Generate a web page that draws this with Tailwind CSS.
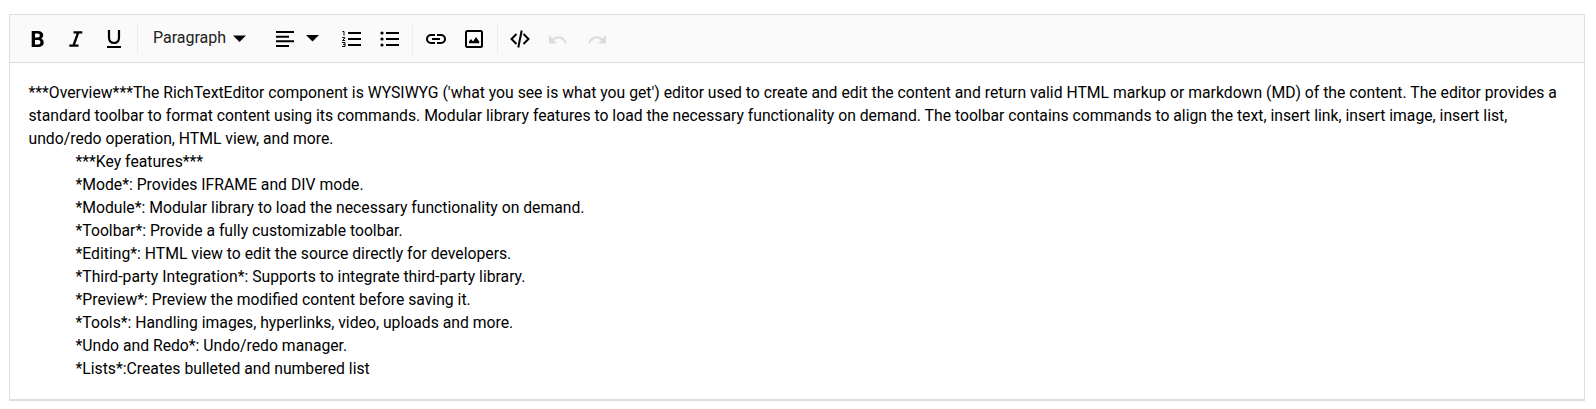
<!DOCTYPE html>
<html lang="en"><head><meta charset="utf-8"><title>Markdown editor</title>
<script src="https://cdn.jsdelivr.net/npm/@tailwindcss/browser@4"></script></head>
<body class="bg-white font-['Roboto',sans-serif] text-black">
<main class="ml-[9px] mt-[14px] flex h-[387px] w-[1576px] flex-col border border-b-2 border-[#dedede]">
<div class="flex h-12 shrink-0 items-start border-b border-[#dedede] bg-[#fafafa] pl-[15px]">
<svg class="mt-2 size-8 mr-1.5" viewBox="0 0 32 32"><path transform="translate(.7 0)" fill-rule="evenodd" d="M6 8h6.200c3.400 0 5.300 1.600 5.300 4.300 0 1.600-.8 2.800-2 3.400 1.600.5 2.500 1.900 2.500 3.800 0 2.900-2.200 4.500-5.500 4.500H6zM9.300 10.500v4h2.600c1.500 0 2.200-.7 2.200-2s-.7-2-2.100-2zM9.300 17v4.500h3.100c1.500 0 2.300-.8 2.300-2.200S13.800 17 12.400 17z"/></svg>
<svg class="mt-2 size-8 mr-1.5" viewBox="0 0 32 32"><path d="M10.500 8.200H19.300v2.300h-3.200L12.100 21.500H15.500V23.800H6.300v-2.300h3.300l4-11h-3.100z"/></svg>
<svg class="mt-2 size-8 mr-1" viewBox="0 0 32 32"><path d="M8 7v7.500c0 4 2 5.500 5 5.500s5-1.500 5-5.500V7" fill="none" stroke="#000" stroke-width="2.200"/><path d="M6 23h14v2H6z"/></svg>
<div class="mt-2 h-[31px] w-px bg-[#ececec]"></div>
<button class="ml-[15px] mt-[11px] flex h-6 w-[93px] items-center justify-between text-base text-[#212121]"><span>Paragraph</span><svg class="size-[13px] mt-0.5" viewBox="0 0 13 13"><path d="M0 2.500h13L6.500 9z" fill="#000"/></svg></button>
<svg class="ml-[30px] mt-4 h-4 w-[18px]" viewBox="0 0 18 16"><path d="M0 0h18v2H0zM0 4.700h13v2H0zM0 9.300h18v2H0zM0 14h13v2H0z"/></svg>
<svg class="ml-3 mt-5 h-[7px] w-[13px]" viewBox="0 0 13 7"><path d="M0 0h13L6.500 6.500z"/></svg>
<svg class="ml-[23px] mt-4 h-4 w-[19px]" viewBox="0 0 19 16"><path d="M6 1h13v2H6zM6 7h13v2H6zM6 13h13v2H6z"/><path d="M.5.500H2V4.500M.2 6.500h2.600v.5L.5 9.500H3.200M0 11.500h3v4H0M1 13.500h2" fill="none" stroke="#000"/></svg>
<svg class="ml-[19px] mt-4 h-4 w-[19px]" viewBox="0 0 19 16"><path d="M6 1h13v2H6zM6 7h13v2H6zM6 13h13v2H6z"/><circle cx="2" cy="2" r="1.600"/><circle cx="2" cy="8" r="1.600"/><circle cx="2" cy="14" r="1.600"/></svg>
<div class="ml-[13px] mt-2 h-[31px] w-px bg-[#ececec]"></div>
<svg class="ml-[13px] mt-[18px] h-3 w-5" viewBox="0 0 20 12"><path d="M9 2H5a4 4 0 0 0 0 8h4M11 2h4a4 4 0 0 1 0 8h-4M6 6h8" fill="none" stroke="#000" stroke-width="2"/></svg>
<svg class="ml-[19px] mt-[15px] size-[18px]" viewBox="0 0 18 18"><rect x="1" y="1" width="16" height="16" rx="1.500" fill="none" stroke="#000" stroke-width="2"/><path d="M4 13.300V11.500l2-2.500 2 2.500L11 7l3.200 4.500v1.800z"/></svg>
<div class="ml-[14px] mt-2 h-[31px] w-px bg-[#ececec]"></div>
<svg class="ml-3 mt-[15px] h-[18px] w-5" viewBox="0 0 20 18"><path d="M6.500 4L1.500 9l5 5M13.500 4l5 5-5 5M11.700.5L8.300 17.500" fill="none" stroke="#000" stroke-width="2"/></svg>
<svg class="ml-[19px] mt-5 h-[9px] w-[18px]" viewBox="0 0 18 9"><path d="M0 0v8.500h8L5 5.400c2-1.700 4-2.200 6-1.700 2.300.6 4 2.300 4.900 4.800l2-.7C16.500 4 13.500 1.200 9.500 1.200c-2.400 0-4.400.9-6 2.400z" fill="#dcdcdc"/></svg>
<svg class="ml-[21px] mt-5 h-[9px] w-[18px]" viewBox="0 0 18 9"><path transform="matrix(-1 0 0 1 18 0)" d="M0 0v8.500h8L5 5.400c2-1.700 4-2.200 6-1.700 2.300.6 4 2.300 4.900 4.800l2-.7C16.500 4 13.500 1.200 9.500 1.200c-2.400 0-4.400.9-6 2.400z" fill="#dcdcdc"/></svg>
</div>
<div class="flex-1 whitespace-nowrap pl-[18.5px] pt-[18px] text-[15.745px] leading-[23px]">
<p>***Overview***The RichTextEditor component is WYSIWYG ('what you see is what you get') editor used to create and edit the content and return valid HTML markup or markdown (MD) of the content. The editor provides a<br>standard toolbar to format content using its commands. Modular library features to load the necessary functionality on demand. The toolbar contains commands to align the text, insert link, insert image, insert list,<br>undo/redo operation, HTML view, and more.</p>
<div class="pl-[47px]"><p>***Key features***</p><p>*Mode*: Provides IFRAME and DIV mode.</p><p>*Module*: Modular library to load the necessary functionality on demand.</p><p>*Toolbar*: Provide a fully customizable toolbar.</p><p>*Editing*: HTML view to edit the source directly for developers.</p><p>*Third-party Integration*: Supports to integrate third-party library.</p><p>*Preview*: Preview the modified content before saving it.</p><p>*Tools*: Handling images, hyperlinks, video, uploads and more.</p><p>*Undo and Redo*: Undo/redo manager.</p><p>*Lists*:Creates bulleted and numbered list</p></div>
</div>
</main></body></html>
